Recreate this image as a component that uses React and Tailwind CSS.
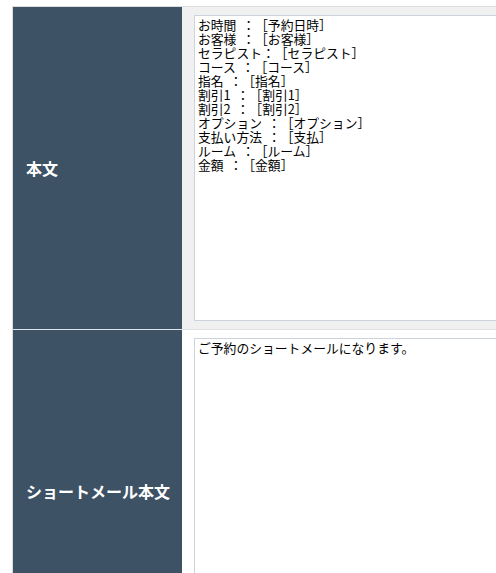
import React from "react";

const body = `お時間 ：［予約日時］
お客様 ：［お客様］
セラピスト：［セラピスト］
コース ：［コース］
指名 ：［指名］
割引1 ：［割引1］
割引2 ：［割引2］
オプション ：［オプション］
支払い方法 ：［支払］
ルーム ：［ルーム］
金額 ：［金額］`;

function Row({ label, value, bg, first }) {
  return (
    <div className={`flex ${first ? "" : "border-t border-[#dfe3e7]"}`}>
      <div className="w-[169px] shrink-0 bg-[#3e5266] flex items-center pl-[13px]">
        <span className="text-white font-bold text-[16px] leading-none" style={{ fontFamily: '"Noto Sans CJK JP", sans-serif' }}>
          {label}
        </span>
      </div>
      <div className={`flex-1 ${bg} pt-[8px] pb-[8px] pl-[12px]`}>
        <textarea
          lang="ja"
          readOnly
          value={value}
          className="block w-[420px] h-[306px] border border-[#ccd3db] bg-white text-black text-[12.8px] leading-[14px] pl-[3px] pt-[2px] resize-none outline-none overflow-hidden [text-spacing-trim:space-all] [word-spacing:3px]"
          style={{ fontFamily: '"Noto Sans CJK JP", sans-serif' }}
        />
      </div>
    </div>
  );
}

export default function App() {
  return (
    <div lang="ja" className="w-[496px] h-[573px] overflow-hidden bg-white pt-[6px] pl-[12px]">
      <div className="w-[600px] border-t border-l border-[#dcdcdc]">
        <Row label="本文" value={body} bg="bg-[#f0f0f0]" first />
        <Row label="ショートメール本文" value="ご予約のショートメールになります。" bg="bg-white" />
      </div>
    </div>
  );
}
